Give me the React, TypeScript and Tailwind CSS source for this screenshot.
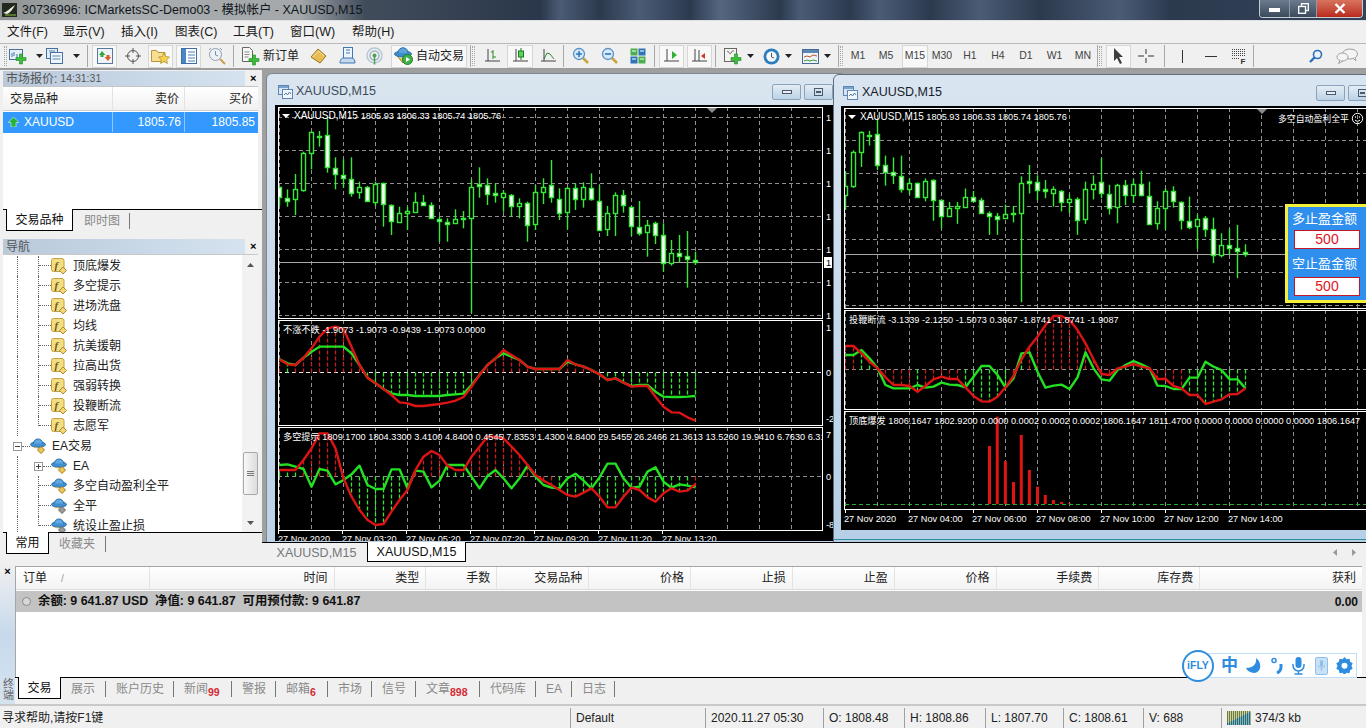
import React from "react";

type Candle = [number, number, number, number, number];

// values read off the reference, 3x zoom units: high, body top, body bottom, low, filled
const candles: Candle[] = [
    [258, 260, 292, 318, 1], [268, 295, 302, 320, 1], [222, 268, 298, 345, 0], [155, 160, 270, 275, 0],
    [95, 97, 160, 208, 0], [93, 107, 108, 140, 1], [55, 104, 202, 218, 1], [172, 203, 223, 268, 1],
    [178, 224, 235, 263, 1], [172, 236, 280, 290, 1], [245, 260, 277, 296, 0], [258, 260, 304, 305, 1],
    [245, 253, 305, 318, 0], [248, 250, 313, 380, 1], [313, 314, 364, 405, 1], [320, 340, 365, 368, 0],
    [320, 334, 340, 390, 0], [277, 305, 335, 335, 0], [285, 305, 316, 318, 1], [307, 314, 355, 357, 1],
    [350, 356, 364, 425, 1], [355, 365, 373, 425, 1], [328, 358, 370, 372, 0], [333, 355, 357, 385, 1],
    [238, 260, 355, 640, 0], [202, 253, 259, 293, 1], [235, 256, 283, 315, 1], [250, 280, 286, 308, 1],
    [270, 280, 290, 335, 0], [282, 284, 319, 350, 1], [295, 310, 319, 355, 0], [305, 310, 376, 425, 1],
    [255, 277, 373, 390, 0], [235, 262, 277, 312, 0], [180, 256, 292, 308, 1], [265, 296, 338, 360, 1],
    [262, 265, 335, 388, 0], [250, 265, 298, 330, 1], [247, 262, 298, 323, 0], [220, 263, 298, 302, 1],
    [255, 302, 390, 392, 1], [318, 340, 388, 408, 0], [277, 286, 338, 408, 0], [270, 284, 316, 338, 1],
    [318, 320, 378, 408, 1], [303, 380, 400, 407, 1], [360, 374, 397, 470, 0], [365, 370, 405, 432, 1],
    [370, 406, 488, 515, 1], [420, 458, 490, 497, 0], [405, 458, 468, 488, 1], [393, 467, 478, 563, 1],
    [455, 479, 486, 495, 1],
];

const sub1Red = [133, 148, 150, 128, 100, 65, 40, 35, 42, 95, 150, 188, 205, 222, 240, 262, 265, 273, 273, 270, 267, 263, 257, 246, 215, 180, 150, 130, 105, 120, 135, 155, 162, 162, 162, 162, 135, 148, 155, 165, 178, 195, 190, 203, 215, 213, 213, 245, 275, 292, 293, 307, 317];
const sub1Green = [133, 145, 150, 128, 110, 95, 95, 95, 95, 115, 150, 188, 205, 222, 235, 240, 240, 243, 243, 243, 243, 240, 238, 236, 210, 180, 150, 130, 115, 125, 135, 155, 162, 162, 162, 162, 140, 148, 155, 165, 178, 195, 190, 203, 213, 210, 210, 230, 245, 246, 246, 245, 243];
const sub2Red = [465, 465, 465, 435, 400, 355, 355, 400, 490, 545, 585, 615, 630, 627, 590, 555, 525, 465, 425, 408, 420, 452, 465, 465, 425, 395, 365, 365, 370, 395, 420, 450, 480, 497, 510, 525, 540, 545, 533, 520, 545, 577, 577, 545, 518, 525, 547, 560, 535, 520, 530, 527, 507];
const sub2Green = [450, 448, 455, 462, 515, 462, 467, 508, 495, 478, 452, 510, 522, 522, 463, 463, 520, 467, 470, 517, 497, 450, 450, 450, 485, 520, 483, 465, 490, 520, 490, 452, 485, 510, 518, 520, 490, 476, 497, 520, 487, 446, 446, 490, 518, 515, 470, 457, 500, 518, 508, 512, 517];
const rightRed = [138, 138, 160, 185, 205, 232, 255, 255, 258, 275, 258, 238, 230, 237, 237, 262, 288, 304, 305, 290, 262, 228, 178, 140, 110, 75, 48, 48, 60, 90, 130, 178, 222, 225, 205, 200, 192, 200, 205, 237, 237, 258, 265, 285, 285, 312, 305, 298, 283, 282, 265];
const rightGreen = [165, 165, 150, 175, 205, 255, 265, 265, 265, 255, 263, 260, 248, 254, 255, 262, 230, 198, 198, 225, 262, 235, 160, 157, 215, 263, 257, 254, 267, 232, 157, 205, 238, 242, 210, 195, 183, 193, 205, 257, 258, 267, 267, 233, 233, 185, 200, 210, 238, 238, 265];
const bars: [number, number][] = [[454, 438], [477, 350], [501, 483], [525, 546], [548, 405], [572, 510], [596, 560], [619, 585], [643, 600], [667, 606], [690, 610]];

const GRID = "#8f8f8f";
const CANDLE = "#38e838";

function range(from: number, step: number, count: number) {
    return Array.from({ length: count }, (_, i) => from + step * i);
}

function Grid({ xs, ys, top, bottom, left, right }: { xs: number[]; ys: number[]; top: number; bottom: number; left: number; right: number }) {
    return (
        <g stroke={GRID} strokeWidth="1" strokeDasharray="4 3" fill="none" shapeRendering="crispEdges">
            {xs.map((x) => (
                <line key={x} x1={x} x2={x} y1={top} y2={bottom} />
            ))}
            {ys.map((y) => (
                <line key={y} x1={left} x2={right} y1={y} y2={y} />
            ))}
        </g>
    );
}

function Candles({ x, y, first, clip }: { x: (i: number) => number; y: (v: number) => number; first: number; clip: string }) {
    return (
        <g clipPath={`url(#${clip})`}>
            {candles.map((c, i) => {
                if (i < first) return null;
                const cx = x(i);
                const bt = Math.round(y(c[1])) + 0.5;
                const bb = Math.max(Math.round(y(c[2])) + 0.5, bt + 1);
                return (
                    <g key={i}>
                        <line x1={cx} x2={cx} y1={y(c[0])} y2={y(c[3])} stroke={CANDLE} strokeWidth="1.4" />
                        <rect x={cx - 2} y={bt} width={4} height={bb - bt} fill={c[4] ? "#ffffff" : "#000000"} stroke={CANDLE} strokeWidth="1.4" />
                    </g>
                );
            })}
        </g>
    );
}

function Lines({ xs, red, green, y, zero, toGreen }: { xs: number[]; red: number[]; green: number[]; y: (v: number) => number; zero: number; toGreen?: boolean }) {
    const pts = (a: number[]) => a.map((v, i) => `${xs[i]},${y(v)}`).join(" ");
    return (
        <g fill="none">
            {xs.map((x, i) => {
                const r = y(red[i]);
                const g = y(green[i]);
                if (Math.abs(r - zero) < 2 && Math.abs(g - zero) < 2) return null;
                const isRed = r < g - 0.5 || (Math.abs(r - g) <= 0.5 && r < zero);
                const end = isRed ? r : toGreen ? g : Math.max(r, g);
                return <line key={x} x1={x} x2={x} y1={zero} y2={end} stroke={isRed ? "#c81c1c" : "#30e830"} strokeWidth="1.3" strokeDasharray="4 2" />;
            })}
            <polyline points={pts(green)} stroke="#22e022" strokeWidth="2.4" strokeLinejoin="round" />
            <polyline points={pts(red)} stroke="#dc1414" strokeWidth="2.4" strokeLinejoin="round" />
        </g>
    );
}

function ChartText({ x, y, children, size = 9.2 }: { x: number; y: number; children: React.ReactNode; size?: number }) {
    return (
        <text x={x} y={y} fill="#ffffff" fontSize={size} xmlSpace="preserve">
            {children}
        </text>
    );
}

function LeftChart() {
    const xs = range(279.5, 8, 53);
    const gx = range(279.5, 32, 17);
    const y = (v: number) => 100 + v / 3;
    const ys = (v: number) => 315 + v / 3;
    return (
        <svg className="block w-[558px] h-[436px] font-['Liberation_Sans','Noto_Sans_CJK_SC',sans-serif]" viewBox="275 105 558 436">
            <defs>
                <clipPath id="lm"><rect x="278" y="107" width="545" height="212" /></clipPath>
            </defs>
            <Grid xs={gx} ys={[117.5, 150.5, 183.5, 216.5, 249.5, 282.5, 315.5]} top={107} bottom={319} left={278} right={823} />
            <line x1="278" x2="823" y1="262.5" y2="262.5" stroke="#a8a8a8" shapeRendering="crispEdges" />
            <Candles x={(i) => xs[i]} y={y} first={0} clip="lm" />
            <rect x="278.5" y="107.5" width="544" height="211" fill="none" stroke="#fff" shapeRendering="crispEdges" />
            <polygon points="707,108 717,108 712,113" fill="#8a8a8a" />
            <polygon points="282,114 290,114 286,118" fill="#fff" />
            <ChartText x={294} y={119} size={10}>XAUUSD,M15</ChartText>
            <ChartText x={360.7} y={119}>1805.93 1806.33 1805.74 1805.76</ChartText>

            <Grid xs={gx} ys={[]} top={320} bottom={425} left={278} right={823} />
            <line x1="278" x2="823" y1="372.5" y2="372.5" stroke="#e8e8e8" strokeDasharray="4 3" shapeRendering="crispEdges" />
            <Lines xs={xs} red={sub1Red} green={sub1Green} y={ys} zero={372.5} toGreen />
            <rect x="278.5" y="320.5" width="544" height="105" fill="none" stroke="#fff" shapeRendering="crispEdges" />
            <ChartText x={283} y={333}>不涨不跌 -1.9073 -1.9073 -0.9439 -1.9073 0.0000</ChartText>

            <Grid xs={gx} ys={[476.5]} top={427} bottom={530} left={278} right={823} />
            <Lines xs={xs} red={sub2Red} green={sub2Green} y={ys} zero={476.5} />
            <rect x="278.5" y="427.5" width="544" height="102.5" fill="none" stroke="#fff" shapeRendering="crispEdges" />
            <svg x="278" y="427" width="545" height="20" viewBox="278 427 545 20">
                <ChartText x={283} y={440}>多空提示 1809.1700 1804.3300 3.4100 4.8400 0.4545 7.8353 1.4300 4.8400 29.5455 26.2466 21.3613 13.5260 19.9410 6.7630 6.3100</ChartText>
            </svg>

            {[117, 150, 183, 216, 249, 282, 315].map((v) => (
                <ChartText key={v} x={826} y={v + 4}>1</ChartText>
            ))}
            <rect x="824" y="257" width="8" height="11" fill="#fff" />
            <text x="826" y="266" fontSize="9.2" fill="#000">1</text>
            <ChartText x={826} y={331}>1</ChartText>
            <ChartText x={826} y={376}>0</ChartText>
            <ChartText x={826} y={422}>-2</ChartText>
            <ChartText x={826} y={438}>7</ChartText>
            <ChartText x={826} y={480}>0</ChartText>
            <ChartText x={826} y={528}>-8</ChartText>
            {range(278.5, 64, 7).map((x) => (
                <line key={x} x1={x} x2={x} y1={530} y2={534} stroke="#fff" />
            ))}
            {["27 Nov 2020", "27 Nov 03:20", "27 Nov 05:20", "27 Nov 07:20", "27 Nov 09:20", "27 Nov 11:20", "27 Nov 13:20"].map((t, i) => (
                <ChartText key={t} x={278 + 64 * i} y={542}>{t}</ChartText>
            ))}
        </svg>
    );
}

function RightChart() {
    const x = (i: number) => 845.5 + 8 * (i - 2);
    const gx = range(845.5, 32, 17);
    const y1 = (v: number) => 100 + v / 3;
    const y = (v: number) => 134.3 + 0.94 * (y1(v) - 134.67);
    const xs = range(845.5, 8, 51);
    const ys = (v: number) => 300 + v / 3;
    return (
        <svg className="block w-[525px] h-[424px] font-['Liberation_Sans','Noto_Sans_CJK_SC',sans-serif]" viewBox="841 106 525 424">
            <defs>
                <clipPath id="rm"><rect x="845" y="108" width="525" height="200" /></clipPath>
            </defs>
            <Grid xs={gx} ys={[140.5, 173.5, 206.5, 239.5, 272.5, 305.5]} top={108} bottom={308} left={845} right={1366} />
            <line x1="845" x2="1366" y1="254.5" y2="254.5" stroke="#a8a8a8" shapeRendering="crispEdges" />
            <Candles x={x} y={y} first={1} clip="rm" />
            <rect x="844.5" y="108.5" width="530" height="199.5" fill="none" stroke="#fff" shapeRendering="crispEdges" />
            <polygon points="1257,109 1267,109 1262,114" fill="#8a8a8a" />
            <polygon points="848,115 856,115 852,119" fill="#fff" />
            <ChartText x={860} y={120} size={10}>XAUUSD,M15</ChartText>
            <ChartText x={926.3} y={120}>1805.93 1806.33 1805.74 1805.76</ChartText>
            <ChartText x={1278} y={122} size={8.9}>多空自动盈利全平</ChartText>
            <circle cx="1357.5" cy="118.5" r="5.2" fill="none" stroke="#fff" />
            <path d="M1355 120c1 1.6 4 1.6 5 0" fill="none" stroke="#fff" />
            <circle cx="1355.5" cy="117" r=".7" fill="#fff" />
            <circle cx="1359.5" cy="117" r=".7" fill="#fff" />

            <Grid xs={gx} ys={[]} top={310} bottom={409} left={845} right={1366} />
            <line x1="845" x2="1366" y1="369.5" y2="369.5" stroke={GRID} strokeDasharray="4 3" shapeRendering="crispEdges" />
            <Lines xs={xs} red={rightRed} green={rightGreen} y={ys} zero={369.5} />
            <rect x="844.5" y="310.5" width="530" height="99" fill="none" stroke="#fff" shapeRendering="crispEdges" />
            <ChartText x={849} y={323}>投鞭断流 -3.1339 -2.1250 -1.5073 0.3667 -1.8741 -1.8741 -1.9087</ChartText>

            <Grid xs={gx} ys={[]} top={411} bottom={509} left={845} right={1366} />
            <line x1="845" x2="1366" y1="504.5" y2="504.5" stroke="#28b028" strokeDasharray="4 3" shapeRendering="crispEdges" />
            {bars.map(([bx, by]) => (
                <rect key={bx} x={836 + bx / 2.958 - 1.5} y={300 + by / 3} width="3" height={504 - (300 + by / 3)} fill="#e01414" />
            ))}
            <rect x="844.5" y="411.5" width="530" height="98" fill="none" stroke="#fff" shapeRendering="crispEdges" />
            <ChartText x={849} y={424}>顶底爆发 1806.1647 1802.9200 0.0000 0.0002 0.0002 0.0002 1806.1647 1811.4700 0.0000 0.0000 0.0000 0.0000 1806.1647</ChartText>

            {range(845.5, 64, 7).map((tx) => (
                <line key={tx} x1={tx} x2={tx} y1={509} y2={513} stroke="#fff" />
            ))}
            {["27 Nov 2020", "27 Nov 04:00", "27 Nov 06:00", "27 Nov 08:00", "27 Nov 10:00", "27 Nov 12:00", "27 Nov 14:00"].map((t, i) => (
                <ChartText key={t} x={844 + 64 * i} y={522}>{t}</ChartText>
            ))}
        </svg>
    );
}

/* ---------- small pictures ---------- */

function WinIcon() {
    return (
        <svg width="15" height="15" viewBox="0 0 15 15">
            <rect x=".5" y="1.5" width="10" height="9" fill="#d8e6f4" stroke="#5b86b5" />
            <rect x="4.5" y="5.5" width="10" height="9" fill="#f2f7fc" stroke="#5b86b5" />
            <path d="M6 11l2-2 1.5 2 2-3 1.5 2" fill="none" stroke="#5a7fa8" />
            <rect x="1" y="2" width="9" height="2" fill="#7aa3cc" />
        </svg>
    );
}

function Plus({ x, y }: { x: number; y: number }) {
    return <path d={`M${x + 3.5} ${y}h3v3.5h3.5v3h-3.5v3.5h-3v-3.5h-3.5v-3h3.5z`} fill="#3dbb3a" stroke="#1d8a22" strokeWidth=".6" />;
}

function Caret({ ml = "ml-[9px]" }: { ml?: string }) {
    return <svg width="7" height="4" viewBox="0 0 7 4" className={ml}><path d="M0 0h7L3.500 4z" fill="#222" /></svg>;
}

function IconNewChart() {
    return (
        <svg width="18" height="18" viewBox="0 0 18 18">
            <rect x=".5" y="2.500" width="13" height="10" fill="#e6eef8" stroke="#47709f" />
            <path d="M3 10V6M5 9V5M8 10V7" stroke="#3f77ad" />
            <Plus x={7} y={7} />
        </svg>
    );
}

function IconProfiles() {
    return (
        <svg width="18" height="17" viewBox="0 0 18 17">
            <rect x=".5" y=".5" width="11" height="10" fill="#dfeaf6" stroke="#47709f" />
            <rect x="4.500" y="4.500" width="12" height="11" fill="#eff5fb" stroke="#47709f" />
            <path d="M6.500 8h8M6.500 11h8M3 3h6" stroke="#5c87b3" />
        </svg>
    );
}

function IconQuotes() {
    return (
        <svg width="16" height="16" viewBox="0 0 16 16">
            <rect x=".5" y=".5" width="15" height="15" fill="#eef4fa" stroke="#58799e" />
            <path d="M4.500 3L8 7H6v2H3V7H1.500z" transform="translate(.5 0)" fill="#36a83a" />
            <path d="M11.500 13L8 9h2V7h3v2h1.500z" transform="translate(-.5 0)" fill="#dd5a2a" />
        </svg>
    );
}

function IconCross() {
    return (
        <svg width="18" height="18" viewBox="0 0 18 18" fill="none" stroke="#555">
            <circle cx="9" cy="9" r="5.500" />
            <path d="M9 1v5M9 12v5M1 9h5M12 9h5" />
        </svg>
    );
}

function IconFolderStar() {
    return (
        <svg width="20" height="18" viewBox="0 0 20 18">
            <path d="M.5 3.500h5l1.500 2h7v9H.5z" fill="#f6df90" stroke="#b8953a" />
            <path d="M13 6l1.700 3.600 3.800.5-2.800 2.600.7 3.800-3.400-1.900-3.400 1.900.7-3.800-2.800-2.600 3.800-.5z" fill="#f6d34c" stroke="#a8862a" strokeWidth=".7" />
        </svg>
    );
}

function IconNavigator() {
    return (
        <svg width="16" height="16" viewBox="0 0 16 16">
            <rect x=".5" y=".5" width="15" height="15" fill="#fff" stroke="#3d6ea5" />
            <rect x="1" y="1" width="4" height="14" fill="#4a86c6" />
            <path d="M7 4h7M7 7h7M7 10h7M7 13h7" stroke="#4c7cae" />
        </svg>
    );
}

function IconTester() {
    return (
        <svg width="18" height="18" viewBox="0 0 18 18" fill="none">
            <circle cx="7.500" cy="7.500" r="6" fill="#edf2f8" stroke="#8f9dad" />
            <path d="M7.500 4v4l2.500 1" stroke="#7d8a9a" />
            <path d="M3 1L1 3M12 1l2 2" stroke="#8f9dad" />
            <path d="M12 12l5 5" stroke="#c9a04a" strokeWidth="2" />
        </svg>
    );
}

function IconNewOrder() {
    return (
        <svg width="18" height="20" viewBox="0 0 18 20">
            <path d="M.5 1.500h7l3 3v11H.5z" fill="#f6f6f4" stroke="#666" />
            <path d="M2.500 6h5M2.500 8.500h5M2.500 11h4" stroke="#8a8a8a" />
            <Plus x={7} y={9} />
        </svg>
    );
}

function IconBook() {
    return (
        <svg width="17" height="16" viewBox="0 0 17 16">
            <path d="M1 9l7-8 8 7-6 7z" fill="#e9bc55" stroke="#9a7420" />
            <path d="M3 9l5.500-6 5.500 5" fill="none" stroke="#f6e2a4" />
        </svg>
    );
}

function IconPerson() {
    return (
        <svg width="17" height="18" viewBox="0 0 17 18">
            <rect x="4.500" y=".5" width="9" height="11" fill="#eef4fb" stroke="#3f76b4" />
            <path d="M7 3h4M7 6h4" stroke="#3f76b4" />
            <path d="M1 16c0-4 2-5 4-5h7c3 0 4 2 4 5z" fill="#c5d9ee" stroke="#3f76b4" />
        </svg>
    );
}

function IconSignal() {
    return (
        <svg width="17" height="18" viewBox="0 0 17 18" fill="none">
            <circle cx="8.500" cy="8.500" r="7.500" stroke="#b6c7d6" strokeWidth="1.500" />
            <circle cx="8.500" cy="8.500" r="4.500" stroke="#9cb6c7" strokeWidth="1.500" />
            <circle cx="8.500" cy="8.500" r="2" fill="#4ca550" />
            <path d="M8.500 8.500v9" stroke="#4ca550" strokeWidth="1.500" />
        </svg>
    );
}

function IconAuto() {
    return (
        <svg width="20" height="20" viewBox="0 0 20 20">
            <ellipse cx="9" cy="8" rx="8.500" ry="3" fill="#3d8ccc" stroke="#2b6ea5" />
            <path d="M4 7c0-7 10-7 10 0" fill="#5ea4dc" stroke="#2b6ea5" />
            <path d="M4 11l5 6 4-3" fill="#edc24e" stroke="#a37e1c" />
            <circle cx="13.500" cy="13.500" r="5" fill="#3fb24a" stroke="#1f7f2c" />
            <path d="M12 11l4 2.500-4 2.500z" fill="#fff" />
        </svg>
    );
}

function Axes({ children }: { children: React.ReactNode }) {
    return (
        <svg width="15" height="16" viewBox="0 0 15 16" fill="none">
            {children}
            <path d="M3 1v12M0 13h15" stroke="#444" />
        </svg>
    );
}

function IconBars() {
    return <Axes><path d="M8 2v9M6 4h2M8 9h3" stroke="#2d8a2d" /></Axes>;
}

function IconCandle() {
    return <Axes><path d="M8 0v12" stroke="#1d7a1d" /><rect x="5.500" y="3" width="5" height="6" fill="#5fd05f" stroke="#1d7a1d" /></Axes>;
}

function IconLine() {
    return <Axes><path d="M3 11l3-6 3 1 4 5" stroke="#2d8a2d" /></Axes>;
}

function IconZoom({ plus }: { plus?: boolean }) {
    return (
        <svg width="18" height="18" viewBox="0 0 18 18" fill="none">
            <path d="M10 10l6 6" stroke="#c9a53e" strokeWidth="2.500" />
            <circle cx="7" cy="7" r="5.500" fill="#d7e8f8" stroke="#5791c8" strokeWidth="1.300" />
            <path d={plus ? "M4 7h6M7 4v6" : "M4 7h6"} stroke="#2f78bc" strokeWidth="1.600" />
        </svg>
    );
}

function IconTile() {
    return (
        <svg width="16" height="16" viewBox="0 0 16 16">
            <rect x=".5" y=".5" width="7" height="7" fill="#4cae4c" />
            <rect x="8.500" y=".5" width="7" height="7" fill="#2f74b8" />
            <rect x=".5" y="8.500" width="7" height="7" fill="#2f74b8" />
            <rect x="8.500" y="8.500" width="7" height="7" fill="#4cae4c" />
            <path d="M2 3h4M10 3h4M2 11h4M10 11h4" stroke="#fff" />
        </svg>
    );
}

function IconShift() {
    return <Axes><path d="M8 3l5 4-5 4z" fill="#35b035" /></Axes>;
}

function IconScroll() {
    return <Axes><path d="M7 2v11" stroke="#444" /><path d="M13 5l-4 3 4 3z" fill="#cc3a2a" /></Axes>;
}

function IconAddInd() {
    return (
        <svg width="18" height="18" viewBox="0 0 18 18">
            <rect x=".5" y="1.500" width="12" height="13" fill="#f3f3f0" stroke="#666" />
            <path d="M3 5c2-3 2 4 4 1s1-2 3-2" fill="none" stroke="#666" />
            <Plus x={7} y={7} />
        </svg>
    );
}

function IconClock() {
    return (
        <svg width="17" height="17" viewBox="0 0 17 17">
            <circle cx="8.500" cy="8.500" r="8" fill="#2c7dbd" />
            <circle cx="8.500" cy="8.500" r="5.200" fill="#f4f8fb" />
            <path d="M8.500 5v4l2.500 1" stroke="#555" fill="none" />
        </svg>
    );
}

function IconTemplate() {
    return (
        <svg width="17" height="15" viewBox="0 0 17 15">
            <rect x=".5" y=".5" width="16" height="14" fill="#eef3f8" stroke="#446b92" />
            <rect x="1" y="1" width="15" height="3" fill="#5b87b3" />
            <path d="M2 8l3-1 3 1 3-2 4 1" stroke="#c0572a" fill="none" />
            <path d="M2 12l3-1 3 1 3-1 4 1" stroke="#3f9c3f" fill="none" />
        </svg>
    );
}

function IconSearch() {
    return (
        <svg width="14" height="14" viewBox="0 0 14 14" fill="none" stroke="#2a6fc0" strokeWidth="1.600">
            <circle cx="8.500" cy="5.500" r="4" />
            <path d="M5.500 8.500L1 13" strokeWidth="2.400" />
        </svg>
    );
}

function IconChat() {
    return (
        <svg width="22" height="16" viewBox="0 0 22 16" fill="#f4f4f4" stroke="#a0a0a0">
            <ellipse cx="14" cy="6" rx="7.500" ry="5" />
            <path d="M17 10l3 3-1-4" />
            <ellipse cx="6.500" cy="9" rx="5.500" ry="4" />
            <path d="M4 12.500L2.500 15.500 7 13" />
        </svg>
    );
}

function FuncIcon() {
    return (
        <svg width="16" height="16" viewBox="0 0 16 16" className="shrink-0">
            <rect x=".5" y=".5" width="12.500" height="13" rx="2" fill="#f5dd82" stroke="#bfa143" />
            <text x="3.500" y="11" fontSize="11" fontStyle="italic" fontWeight="700" fontFamily="'Liberation Serif', serif" fill="#6b5a20">f</text>
            <path d="M12 9l3.500 3.500-3.500 3.500-3.500-3.500z" fill="#f4d774" stroke="#a98a30" />
        </svg>
    );
}

function HatIcon({ gray }: { gray?: boolean }) {
    return (
        <svg width="17" height="16" viewBox="0 0 17 16" className="shrink-0">
            <ellipse cx="8" cy="6.500" rx="7.500" ry="2.800" fill="#3f8fd2" stroke="#2a6ea6" />
            <path d="M3.500 5.500c0-6 9-6 9 0" fill="#60a8e0" stroke="#2a6ea6" />
            <path d="M4 9.500l4 .5" stroke="#d5b14a" />
            <path d="M11 8.500l3.500 3.500-3.500 3.500-3.500-3.500z" fill={gray ? "#9a9a9a" : "#edc554"} stroke={gray ? "#666" : "#a37e1c"} />
        </svg>
    );
}

/* ---------- shell ---------- */

function TitleBar() {
    return (
        <div className="h-[21px] shrink-0 flex items-center border-b border-[#dfe3e8] bg-[linear-gradient(90deg,#8f9494_0,#a9adaf_120px,#a4a8aa_300px,#414c5b_365px,#2a374a_540px,#4a5b74_560px,#2c3a4e_600px,#4a5b74_640px,#2c3a4e_690px,#55667f_720px,#2c3a4e_780px,#4a5b74_800px,#2c3a4e_850px,#4a5b74_880px,#2c3a4e_930px,#4a5b74_980px,#2c3a4e_1040px,#4a5b74_1120px,#2c3a4e_1170px,#33435a_1366px)]">
            <svg width="15" height="14" viewBox="0 0 15 14" className="ml-[2px] mr-[5px]">
                <rect width="15" height="14" fill="#23291f" />
                <path d="M1 10c4-1 6-4 12-8-2 4-5 8-8 9z" fill="#e9efe2" />
                <path d="M3 12h11" stroke="#8cbf3f" />
            </svg>
            <span className="text-[12.5px] text-[#10161c] pt-[1px]">30736996: ICMarketsSC-Demo03 - 模拟帐户 - XAUUSD,M15</span>
            <div className="ml-auto mr-[3px] self-start flex h-[18px] w-[104px] rounded-b-[4px] border border-t-0 border-[#c5ccd4] overflow-hidden">
                <div className="w-[30px] flex items-center justify-center border-r border-[#8d99a6] bg-gradient-to-b from-[#6c7b8e] to-[#3b4a5d]">
                    <div className="w-[11px] h-[4px] bg-white mt-[3px]" />
                </div>
                <div className="w-[27px] flex items-center justify-center border-r border-[#8d99a6] bg-gradient-to-b from-[#6c7b8e] to-[#3b4a5d]">
                    <svg width="11" height="11" viewBox="0 0 11 11" fill="none" stroke="#fff" strokeWidth="1.300"><rect x="3.500" y=".7" width="6.800" height="6.800" /><rect x=".7" y="3.500" width="6.800" height="6.800" fill="#4a5a6e" /></svg>
                </div>
                <div className="flex-1 flex items-center justify-center bg-gradient-to-b from-[#d8735f] to-[#b8271a]">
                    <svg width="12" height="11" viewBox="0 0 12 11" stroke="#fff" strokeWidth="2.400"><path d="M1.500 1l9 9M10.500 1l-9 9" /></svg>
                </div>
            </div>
        </div>
    );
}

const menus: [string, string][] = [
    ["文件(F)", "w-[56px]"], ["显示(V)", "w-[58px]"], ["插入(I)", "w-[54px]"], ["图表(C)", "w-[58px]"],
    ["工具(T)", "w-[57px]"], ["窗口(W)", "w-[62px]"], ["帮助(H)", "w-[70px]"],
];

function MenuBar() {
    return (
        <div className="h-[22px] shrink-0 flex items-center pl-[7px] bg-[#f0f0f0] text-[12.5px] text-[#1a1a1a]">
            {menus.map(([label, w]) => (
                <span key={label} className={w}>{label}</span>
            ))}
        </div>
    );
}

function Grip() {
    return <div className="w-[3px] h-[20px] mx-[1px] shrink-0 border-x border-dotted border-[#a8a8a8]" />;
}

function Sep() {
    return <div className="w-px h-[22px] shrink-0 bg-[#a8a8a8]" />;
}

const slot = "shrink-0 h-full flex items-center justify-center";
const pressed = "shrink-0 h-[23px] flex items-center justify-center border border-[#d6d6d6] bg-[#f8f8f8]";

function Period({ t, w }: { t: string; w: string }) {
    return <div className={`${slot} ${w} text-[10.5px] text-[#444]`}>{t}</div>;
}

function ToolBar() {
    return (
        <div className="h-[27px] shrink-0 flex items-center border-t border-[#b9b9b9] border-b-2 border-b-[#9c9c9c] bg-[#f0f0f0] pl-[3px]">
            <Grip />
            <div className={`${slot} w-[36px]`}><IconNewChart /><Caret /></div>
            <div className={`${slot} w-[38px]`}><IconProfiles /><Caret /></div>
            <div className="w-[5px] shrink-0" />
            <Sep />
            <div className="w-[4px] shrink-0" />
            <div className={`${pressed} w-[25px]`}><IconQuotes /></div>
            <div className={`${slot} w-[31px]`}><IconCross /></div>
            <div className={`${pressed} w-[25px]`}><IconFolderStar /></div>
            <div className="w-[3px] shrink-0" />
            <div className={`${pressed} w-[25px]`}><IconNavigator /></div>
            <div className={`${slot} w-[32px]`}><IconTester /></div>
            <Sep />
            <div className={`${slot} w-[69px] justify-start pl-[8px] gap-[3px] text-[12px]`}><IconNewOrder /><span>新订单</span></div>
            <div className={`${slot} w-[30px]`}><IconBook /></div>
            <div className={`${slot} w-[28px]`}><IconPerson /></div>
            <div className={`${slot} w-[26px]`}><IconSignal /></div>
            <div className="w-[4px] shrink-0" />
            <div className={`${pressed} w-[76px] gap-[2px] text-[12px]`}><IconAuto /><span>自动交易</span></div>
            <div className="w-[3px] shrink-0" />
            <Sep />
            <Grip />
            <div className="w-[2px] shrink-0" />
            <div className={`${slot} w-[29px]`}><IconBars /></div>
            <div className={`${pressed} w-[26px]`}><IconCandle /></div>
            <div className={`${slot} w-[30px]`}><IconLine /></div>
            <Sep />
            <div className={`${slot} w-[33px]`}><IconZoom plus /></div>
            <div className={`${slot} w-[26px]`}><IconZoom /></div>
            <div className={`${slot} w-[29px]`}><IconTile /></div>
            <div className="w-[2px] shrink-0" />
            <Sep />
            <div className="w-[4px] shrink-0" />
            <div className={`${pressed} w-[25px]`}><IconShift /></div>
            <div className="w-[3px] shrink-0" />
            <div className={`${pressed} w-[25px]`}><IconScroll /></div>
            <div className="w-[3px] shrink-0" />
            <Sep />
            <div className={`${slot} w-[38px] justify-start pl-[8px]`}><IconAddInd /><Caret ml="ml-[5px]" /></div>
            <div className={`${slot} w-[38px] justify-start pl-[9px]`}><IconClock /><Caret ml="ml-[5px]" /></div>
            <div className={`${slot} w-[40px] justify-start pl-[10px]`}><IconTemplate /><Caret ml="ml-[5px]" /></div>
            <div className="w-[6px] shrink-0" />
            <Sep />
            <Grip />
            <Period t="M1" w="w-[28px]" />
            <Period t="M5" w="w-[28px]" />
            <div className="w-[2px] shrink-0" />
            <div className={`${pressed} w-[26px] text-[10.5px] text-[#444]`}>M15</div>
            <Period t="M30" w="w-[28px]" />
            <Period t="H1" w="w-[28px]" />
            <Period t="H4" w="w-[28px]" />
            <Period t="D1" w="w-[28px]" />
            <Period t="W1" w="w-[29px]" />
            <Period t="MN" w="w-[28px]" />
            <Sep />
            <Grip />
            <div className="w-[3px] shrink-0" />
            <div className={`${pressed} w-[25px]`}>
                <svg width="11" height="16" viewBox="0 0 11 16"><path d="M1 0l9 9H6l3 6-2 1-3-6-3 3z" fill="#3d3d3d" /></svg>
            </div>
            <div className={`${slot} w-[30px]`}>
                <svg width="16" height="14" viewBox="0 0 16 14" stroke="#333"><path d="M8 0v5M8 9v5M0 7h6M10 7h6" /></svg>
            </div>
            <div className="w-[3px] shrink-0" />
            <Sep />
            <div className={`${slot} w-[34px]`}><div className="w-px h-[13px] bg-[#333]" /></div>
            <div className={`${slot} w-[24px]`}><div className="h-px w-[12px] bg-[#333]" /></div>
            <div className={`${slot} w-[30px]`}>
                <svg width="15" height="17" viewBox="0 0 15 17">
                    <path d="M1 1.500h13M1 3.500h13M1 5.500h13M1 7.500h13M1 10.500h8" stroke="#444" strokeDasharray="1 1" />
                    <text x="9.500" y="16" fontSize="8" fontWeight="700" fill="#333">F</text>
                </svg>
            </div>
            <Sep />
            <div className="w-[48px] shrink-0" />
            <div className={`${slot} w-[28px]`}><IconSearch /></div>
            <div className={`${slot} w-[34px]`}><IconChat /></div>
        </div>
    );
}

function PanelTitle({ children }: { children: React.ReactNode }) {
    return (
        <div className="h-[15px] shrink-0 flex items-center ml-[3px] text-[12px] text-[#555]">
            <div className="w-[242px] h-full flex items-center pl-[3px] bg-gradient-to-r from-[#b9c9da] to-[#d5e3f0]">{children}</div>
            <span className="ml-[5px] text-[11px] font-bold text-black leading-none">×</span>
        </div>
    );
}

function MarketWatch() {
    return (
        <div className="h-[168px] shrink-0 flex flex-col pt-[1px]">
            <PanelTitle>
                <span>市场报价:</span>
                <span className="ml-[3px] text-[10.5px]">14:31:31</span>
            </PanelTitle>
            <div className="ml-[3px] mr-[4px] h-[124px] bg-white border-t border-[#c5c5c5] text-[12px] text-[#222]">
                <div className="flex h-[24px] items-center bg-gradient-to-b from-white to-[#f1f1f1] border-b border-[#d0d0d0]">
                    <div className="w-[109px] pl-[7px] pt-[1px]">交易品种</div>
                    <div className="w-[72px] h-full flex items-center justify-end pr-[5px] pt-[1px] border-l border-[#e3e3e3]">卖价</div>
                    <div className="flex-1 h-full flex items-center justify-end pr-[5px] pt-[1px] border-l border-[#e3e3e3]">买价</div>
                </div>
                <div className="flex h-[21px] items-center bg-[#3399ff] text-white mt-px pb-[1px]">
                    <div className="w-[109px] flex items-center pl-[5px] gap-[5px]">
                        <svg width="11" height="10" viewBox="0 0 11 10"><path d="M5.500 0L11 5.500H8V10H3V5.500H0z" fill="#28b23a" stroke="#fff" strokeWidth=".5" /></svg>
                        XAUUSD
                    </div>
                    <div className="w-[72px] h-full flex items-center justify-end pr-[3px] border-l border-[#8fc6fb]">1805.76</div>
                    <div className="flex-1 h-full flex items-center justify-end pr-[3px] border-l border-[#8fc6fb]">1805.85</div>
                </div>
            </div>
            <div className="ml-[3px] h-[23px] -mt-px flex items-start border-t border-black text-[12px] text-[#8a8a8a]">
                <div className="ml-[3px] w-[67px] h-[22px] -mt-px flex items-center justify-center bg-white border border-t-0 border-black text-[#111]">交易品种</div>
                <div className="w-[57px] h-[16px] mt-[3px] flex items-center pl-[11px] border-r border-[#777]">即时图</div>
            </div>
        </div>
    );
}

function TreeLines({ last, deep }: { last?: boolean; deep?: boolean }) {
    return (
        <>
            <div className="w-[21px] h-full shrink-0 border-l border-dotted border-[#666] ml-[17px]" />
            {deep ? (
                <div className={`w-[13px] shrink-0 border-l border-dotted border-[#666] ${last ? "h-1/2 self-start" : "h-full"}`}>
                    <div className={`border-b border-dotted border-[#666] ${last ? "h-full" : "h-1/2"}`} />
                </div>
            ) : null}
        </>
    );
}

const funcs = ["顶底爆发", "多空提示", "进场洗盘", "均线", "抗美援朝", "拉高出货", "强弱转换", "投鞭断流", "志愿军"];

function Box({ minus }: { minus?: boolean }) {
    return (
        <div className="w-[9px] h-[9px] border border-[#999] bg-white flex items-center justify-center relative shrink-0">
            <div className="w-[5px] h-px bg-[#444]" />
            {minus ? null : <div className="absolute w-px h-[5px] bg-[#444]" />}
        </div>
    );
}

function Navigator() {
    return (
        <div className="flex-1 flex flex-col min-h-0 mt-[1px]">
            <PanelTitle>
                <span>导航</span>
            </PanelTitle>
            <div className="ml-[3px] mr-[4px] h-[278px] bg-white border-t border-[#c8c8c8] flex overflow-hidden text-[12px] text-[#222]">
                <div className="flex-1 -ml-[3px] pt-[1px] flex flex-col overflow-hidden">
                    {funcs.map((t, i) => (
                        <div key={t} className="h-[20px] shrink-0 flex items-center">
                            <TreeLines deep last={i === funcs.length - 1} />
                            <FuncIcon />
                            <span className="ml-[6px]">{t}</span>
                        </div>
                    ))}
                    <div className="h-[20px] shrink-0 flex items-center">
                        <div className="w-[13px] shrink-0" />
                        <Box minus />
                        <div className="w-[8px] border-b border-dotted border-[#666]" />
                        <HatIcon />
                        <span className="ml-[5px]">EA交易</span>
                    </div>
                    <div className="h-[20px] shrink-0 flex items-center">
                        <TreeLines />
                        <div className="-ml-[4px] flex items-center">
                            <Box />
                            <div className="w-[8px] border-b border-dotted border-[#666]" />
                        </div>
                        <HatIcon />
                        <span className="ml-[5px]">EA</span>
                    </div>
                    <div className="h-[20px] shrink-0 flex items-center">
                        <TreeLines deep />
                        <HatIcon />
                        <span className="ml-[5px]">多空自动盈利全平</span>
                    </div>
                    <div className="h-[20px] shrink-0 flex items-center">
                        <TreeLines deep />
                        <HatIcon gray />
                        <span className="ml-[5px]">全平</span>
                    </div>
                    <div className="h-[20px] shrink-0 flex items-center">
                        <TreeLines deep last />
                        <HatIcon gray />
                        <span className="ml-[5px]">统设止盈止损</span>
                    </div>
                </div>
                <div className="w-[16px] shrink-0 flex flex-col items-center bg-[#f2f2f2]">
                    <div className="h-[20px] flex items-center">
                        <svg width="7" height="4" viewBox="0 0 7 4"><path d="M3.500 0L7 4H0z" fill="#555" /></svg>
                    </div>
                    <div className="mt-[177px] h-[43px] w-[15px] rounded-[2px] border border-[#a8a8a8] bg-gradient-to-r from-[#f8f8f8] to-[#dcdcdc] flex flex-col items-center justify-center gap-[1px]">
                        <div className="w-[7px] h-px bg-[#777]" /><div className="w-[7px] h-px bg-[#777]" /><div className="w-[7px] h-px bg-[#777]" />
                    </div>
                    <div className="mt-auto h-[18px] flex items-center">
                        <svg width="7" height="4" viewBox="0 0 7 4"><path d="M0 0h7L3.500 4z" fill="#555" /></svg>
                    </div>
                </div>
            </div>
            <div className="ml-[3px] h-[23px] flex items-start border-t border-black text-[12px] text-[#8a8a8a]">
                <div className="ml-[3px] w-[43px] h-[22px] -mt-px flex items-center justify-center bg-white border border-t-0 border-black text-[#111]">常用</div>
                <div className="w-[57px] h-[16px] mt-[3px] flex items-center pl-[10px] border-r border-[#777]">收藏夹</div>
            </div>
        </div>
    );
}

function WinButtons() {
    return (
        <>
            <div className="w-[29px] h-[16px] flex items-center justify-center rounded-[2px] border border-[#8ba3ba] bg-gradient-to-b from-[#e4edf5] to-[#bcd2e6]">
                <div className="w-[10px] h-[4px] border border-[#4a5a6a] bg-[#e8eef4]" />
            </div>
            <div className="w-[29px] h-[16px] flex items-center justify-center rounded-[2px] border border-[#8ba3ba] bg-gradient-to-b from-[#e4edf5] to-[#bcd2e6]">
                <div className="w-[9px] h-[8px] border border-[#4a5a6a] flex items-center justify-center"><div className="w-[5px] h-[2px] bg-[#4a5a6a]" /></div>
            </div>
        </>
    );
}

function MdiArea() {
    return (
        <div className="relative h-[472px] w-[1104px] overflow-hidden bg-[#a0a0a0]">
            {/* first chart window */}
            <div className="absolute left-[4px] top-[3px] w-[580px] h-[475px] rounded-t-[6px] border border-[#7b8894] bg-gradient-to-b from-[#dae5ef] to-[#bcd2e7] via-[#c6d8ea]">
                <div className="h-[31px] flex items-center pt-[3px] pl-[11px] gap-[3px] text-[12.5px] text-[#3a4a5a]">
                    <WinIcon />
                    <span>XAUUSD,M15</span>
                    <div className="absolute left-[505px] top-[10px] flex gap-[3px]"><WinButtons /></div>
                </div>
                <div className="ml-[8px] w-[558px] h-[436px] bg-black"><LeftChart /></div>
            </div>
            {/* second chart window, active */}
            <div className="absolute left-[571px] top-[4px] w-[560px] h-[470px] rounded-t-[6px] border border-[#5f6e7c] bg-gradient-to-b from-[#d9e5f0] to-[#b6cfe6]">
                <div className="h-[31px] flex items-center pt-[3px] pl-[9px] gap-[4px] text-[12.5px] text-[#16202a]">
                    <WinIcon />
                    <span>XAUUSD,M15</span>
                    <div className="absolute left-[482px] top-[10px] flex gap-[3px]"><WinButtons /></div>
                </div>
                <div className="ml-[7px] w-[525px] h-[424px] bg-black relative">
                    <RightChart />
                    {/* panel the expert advisor puts on the chart */}
                    <div className="absolute left-[444px] top-[98px] w-[81px] h-[99px] bg-[#2f8fef] border-[3px] border-r-0 border-[#f5f03a] flex flex-col items-center text-[13px] text-white">
                        <div className="h-[22px] flex items-center pr-[5px] mt-[1px]">多止盈金额</div>
                        <div className="w-[66px] h-[19px] bg-white border border-[#c01824] flex items-center justify-center text-[#e0141c] text-[14px]">500</div>
                        <div className="h-[28px] flex items-center pr-[5px] pt-[1px]">空止盈金额</div>
                        <div className="w-[66px] h-[19px] bg-white border border-[#c01824] flex items-center justify-center text-[#e0141c] text-[14px]">500</div>
                    </div>
                </div>
                <div className="h-[9px]" />
                <div className="h-px bg-[#2f8f9f]" />
            </div>
        </div>
    );
}

function ChartTabs() {
    return (
        <div className="h-[21px] shrink-0 flex items-start border-t border-black bg-[#f0f0f0] text-[12.5px]">
            <div className="w-[105px] h-[20px] flex items-center justify-center pl-[4px] text-[#777]">XAUUSD,M15</div>
            <div className="w-[99px] h-[20px] -mt-px pt-[1px] flex items-center justify-center bg-white border border-t-0 border-black text-[#111]">XAUUSD,M15</div>
            <div className="ml-auto mr-[10px] mt-[6px] flex gap-[15px]">
                <svg width="4" height="7" viewBox="0 0 4 7"><path d="M4 0v7L0 3.500z" fill="#999" /></svg>
                <svg width="4" height="7" viewBox="0 0 4 7"><path d="M0 0v7l4-3.500z" fill="#999" /></svg>
            </div>
        </div>
    );
}

const columns: [string, string][] = [
    ["时间", "w-[185px]"], ["类型", "w-[92px]"], ["手数", "w-[71px]"], ["交易品种", "w-[92px]"], ["价格", "w-[102px]"],
    ["止损", "w-[102px]"], ["止盈", "w-[102px]"], ["价格", "w-[102px]"], ["手续费", "w-[103px]"], ["库存费", "w-[101px]"], ["获利", "w-[163px]"],
];

const termTabs: [string, string, string?][] = [
    ["展示", "w-[45px]"], ["账户历史", "w-[68px]"], ["新闻", "w-[58px]", "99"], ["警报", "w-[44px]"], ["邮箱", "w-[52px]", "6"],
    ["市场", "w-[44px]"], ["信号", "w-[44px]"], ["文章", "w-[64px]", "898"], ["代码库", "w-[56px]"], ["EA", "w-[36px]"], ["日志", "w-[43px]"],
];

function IflyBar() {
    return (
        <div className="absolute left-[1182px] top-[90px] h-[25px] w-[175px] flex items-center">
            <div className="absolute left-[14px] right-0 top-0 bottom-0 border border-[#c3def6] bg-white/90" />
            <div className="relative w-[32px] h-[32px] rounded-full border-[2.5px] border-[#2e8de0] bg-white flex items-center justify-center text-[10.5px] font-bold text-[#2e8de0]">iFLY</div>
            <div className="relative flex items-center text-[#2e8de0]">
                <span className="ml-[7px] text-[17px] font-bold leading-none">中</span>
                <svg className="ml-[8px]" width="15" height="16" viewBox="0 0 15 16" fill="#2e8de0"><path d="M10 0c1 6-3 10-10 10 2 5 12 8 14 0 1-4-1-8-4-10z" /></svg>
                <svg className="ml-[10px]" width="12" height="17" viewBox="0 0 12 17" fill="none" stroke="#2e8de0"><circle cx="3" cy="3.500" r="2" strokeWidth="1.500" /><path d="M10 7v3c0 3-2 5-4 6" strokeWidth="3" /></svg>
                <svg className="ml-[9px]" width="13" height="18" viewBox="0 0 13 18" fill="#2e8de0"><rect x="3.500" y="0" width="6" height="11" rx="3" /><path d="M1 7v1.500a5.500 5.500 0 0 0 11 0V7M6.500 14v3M2.500 17h8" fill="none" stroke="#2e8de0" strokeWidth="1.500" /></svg>
                <svg className="ml-[10px]" width="13" height="18" viewBox="0 0 13 18" fill="none"><rect x=".5" y=".5" width="12" height="17" rx="1.500" fill="#c9e1f7" stroke="#8fc0ec" /><rect x="5" y="3" width="3" height="7" rx="1.500" fill="#8fc0ec" /><path d="M3.500 8c0 4 6 4 6 0M6.500 11v3" stroke="#8fc0ec" /></svg>
                <svg className="ml-[8px]" width="17" height="17" viewBox="0 0 17 17" fill="#2e8de0"><path d="M8.500 0l2 2.200 3-.4.600 3 2.600 1.500-1.200 2.700 1.200 2.700-2.600 1.500-.6 3-3-.4-2 2.200-2-2.200-3 .4-.6-3L.3 11.700 1.500 9 .3 6.300l2.600-1.500.6-3 3 .4z" /><circle cx="8.500" cy="8.700" r="3" fill="#fff" /></svg>
            </div>
        </div>
    );
}

function Terminal() {
    return (
        <div className="relative h-[141px] shrink-0 flex bg-[#f0f0f0]">
            <div className="w-[15px] shrink-0 flex flex-col items-center bg-gradient-to-b from-[#f0f0f0] via-[#c7d9eb] to-[#d5e3f0]">
                <span className="mt-[3px] text-[11px] font-bold leading-none text-black">×</span>
                <div className="mt-auto mb-[4px] text-[11px] leading-[12px] text-[#666] [writing-mode:vertical-rl]">终端</div>
            </div>
            <div className="flex-1 flex flex-col min-w-0">
                <div className="mt-[3px] h-[111px] mr-[4px] bg-white border-t border-[#a6a6a6] border-l border-l-[#a6a6a6] text-[12px] text-[#222]">
                    <div className="flex h-[23px] bg-gradient-to-b from-white to-[#f3f3f3] border-b border-[#dcdcdc]">
                        <div className="w-[133px] flex items-center pl-[7px]">订单<span className="ml-[14px] text-[10px] text-[#999]">/</span></div>
                        {columns.map(([t, w], i) => (
                            <div key={i} className={`${w} flex items-center justify-end pr-[6px] border-l border-[#e4e4e4]`}>{t}</div>
                        ))}
                    </div>
                    <div className="mt-px h-[21px] flex items-center bg-[#c3c3c3] font-bold text-[#111] pr-[4px]">
                        <div className="ml-[6px] mr-[7px] w-[9px] h-[9px] rounded-full border border-[#888] bg-[#d8d8d8]" />
                        <span className="text-[12.4px]">余额: 9 641.87 USD&nbsp;&nbsp;净值: 9 641.87&nbsp;&nbsp;可用预付款: 9 641.87</span>
                        <span className="ml-auto">0.00</span>
                    </div>
                </div>
                <div className="h-[23px] flex items-start border-t border-black pl-[3px] text-[12px] text-[#8a8a8a]">
                    <div className="w-[43px] h-[22px] -mt-px flex items-center justify-center bg-white border border-t-0 border-black text-[#111]">交易</div>
                    {termTabs.map(([t, w, n]) => (
                        <div key={t} className={`${w} h-[16px] mt-[3px] flex items-center pl-[10px] border-r border-[#777]`}>
                            <span>{t}</span>
                            {n ? <span className="self-end text-[10.5px] leading-[11px] font-bold text-[#d42a36] -mb-[1px]">{n}</span> : null}
                        </div>
                    ))}
                </div>
            </div>
            <IflyBar />
        </div>
    );
}

function StatusCell({ w, children }: { w: string; children: React.ReactNode }) {
    return <div className={`${w} h-[20px] shrink-0 flex items-center pl-[5px] border-l border-[#a0a0a0]`}>{children}</div>;
}

function StatusBar() {
    return (
        <div className="h-[24px] shrink-0 flex items-center pt-[1px] border-t-2 border-[#c9c9c9] bg-[#f0f0f0] text-[12px] text-[#222]">
            <div className="w-[570px] pl-[2px] shrink-0">寻求帮助,请按F1键</div>
            <StatusCell w="w-[135px]">Default</StatusCell>
            <StatusCell w="w-[118px]">2020.11.27 05:30</StatusCell>
            <StatusCell w="w-[81px]">O: 1808.48</StatusCell>
            <StatusCell w="w-[81px]">H: 1808.86</StatusCell>
            <StatusCell w="w-[78px]">L: 1807.70</StatusCell>
            <StatusCell w="w-[80px]">C: 1808.61</StatusCell>
            <StatusCell w="w-[78px]">V: 688</StatusCell>
            <StatusCell w="w-[120px]">
                <svg width="24" height="14" viewBox="0 0 24 14" className="mr-[4px]">
                    {range(0, 2, 12).map((x, i) => (
                        <g key={x}>
                            <rect x={x} y="0" width="1.300" height="14" fill="#6f7f2a" />
                            <rect x={x} y={12 - i} width="1.300" height={2 + i} fill="#1c6f8a" />
                        </g>
                    ))}
                </svg>
                374/3 kb
            </StatusCell>
        </div>
    );
}

export default function App() {
    return (
        <div className="w-[1366px] h-[728px] overflow-hidden flex flex-col bg-[#f0f0f0] text-[#222] font-['Liberation_Sans','Noto_Sans_CJK_SC',sans-serif]">
            <TitleBar />
            <MenuBar />
            <ToolBar />
            <div className="h-[493px] shrink-0 flex">
                <div className="w-[262px] shrink-0 flex flex-col bg-[#f0f0f0]">
                    <MarketWatch />
                    <Navigator />
                </div>
                <div className="flex-1 flex flex-col min-w-0">
                    <MdiArea />
                    <ChartTabs />
                </div>
            </div>
            <Terminal />
            <StatusBar />
        </div>
    );
}
